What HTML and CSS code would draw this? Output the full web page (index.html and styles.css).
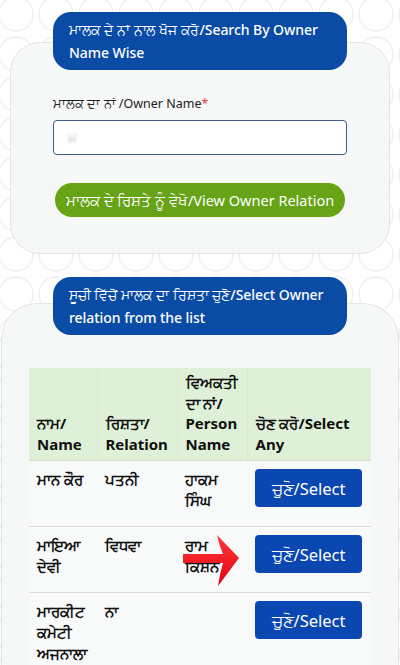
FILE: index.html
```html
<!DOCTYPE html>
<html lang="pa">
<head>
<meta charset="utf-8">
<title>Search By Owner</title>
<link rel="stylesheet" href="styles.css">
</head>
<body>
<div class="page">
  <section class="block block-search">
    <h2 class="pill">ਮਾਲਕ ਦੇ ਨਾਂ ਨਾਲ ਖੋਜ ਕਰੋ/Search By Owner Name Wise</h2>
    <div class="card card-search">
      <label class="field-label" for="owner">ਮਾਲਕ ਦਾ ਨਾਂ /Owner Name<span class="req">*</span></label>
      <div class="input"><span class="blur">ਮ</span></div>
      <button class="btn-green">ਮਾਲਕ ਦੇ ਰਿਸ਼ਤੇ ਨੂੰ ਵੇਖੋ/View Owner Relation</button>
    </div>
  </section>

  <section class="block block-list">
    <h2 class="pill">ਸੂਚੀ ਵਿੱਚੋਂ ਮਾਲਕ ਦਾ ਰਿਸ਼ਤਾ ਚੁਣੋ/Select Owner relation from the list</h2>
    <div class="card card-list">
      <table class="rel">
        <colgroup>
          <col class="c1"><col class="c2"><col class="c3"><col class="c4">
        </colgroup>
        <thead>
          <tr>
            <th>ਨਾਮ/ Name</th>
            <th>ਰਿਸ਼ਤਾ/ Relation</th>
            <th>ਵਿਅਕਤੀ ਦਾ ਨਾਂ/ Person Name</th>
            <th>ਚੋਣ ਕਰੋ/Select Any</th>
          </tr>
        </thead>
        <tbody>
          <tr>
            <td>ਮਾਨ ਕੌਰ</td>
            <td>ਪਤਨੀ</td>
            <td>ਹਾਕਮ ਸਿੰਘ</td>
            <td><button class="btn-select">ਚੁਣੋ/Select</button></td>
          </tr>
          <tr>
            <td>ਮਾਇਆ ਦੇਵੀ</td>
            <td>ਵਿਧਵਾ</td>
            <td class="arrow-cell">ਰਾਮ ਕਿਸ਼ਨ
              <svg class="arrow" width="58" height="52" viewBox="0 0 58 52">
                <defs>
                  <linearGradient id="ag" x1="0" y1="0" x2="0" y2="1">
                    <stop offset="0" stop-color="#ff3b3b"/>
                    <stop offset="1" stop-color="#e00010"/>
                  </linearGradient>
                </defs>
                <path d="M0 19 L40 19 Q36 10 34 0 L56 23 L35 51 Q37 38 40 28 L0 28 Z" fill="url(#ag)"/>
              </svg>
            </td>
            <td><button class="btn-select">ਚੁਣੋ/Select</button></td>
          </tr>
          <tr>
            <td>ਮਾਰਕੀਟ ਕਮੇਟੀ ਅਜਨਾਲਾ</td>
            <td>ਨਾ</td>
            <td></td>
            <td><button class="btn-select">ਚੁਣੋ/Select</button></td>
          </tr>
        </tbody>
      </table>
    </div>
  </section>
</div>
</body>
</html>
```

FILE: styles.css
```css
* { box-sizing: border-box; }
html, body { margin: 0; padding: 0; }
body {
  font-family: "Noto Sans", "Open Sans", sans-serif;
  background-color: #ffffff;
  background-image:
    radial-gradient(circle at 50% 50%, transparent 16px, #f0f0f0 16.5px, #f0f0f0 17.5px, transparent 18px);
  background-size: 40px 40px;
  background-position: -4px -6px;
  height: 665px;
  overflow: hidden;
}
.page { padding-top: 12px; }

.block { display: flex; flex-direction: column; }
.pill {
  position: relative;
  z-index: 2;
  margin: 0 53px;
  padding: 6px 13px 6px 16px;
  background: #0a4ba6;
  color: #fff;
  border-radius: 18px;
  font-size: 14px;
  font-weight: 500;
  line-height: 23px;
  letter-spacing: -0.05px;
}
.card {
  background: #f6f7f7;
  border: 1px solid #e3e5e5;
  border-radius: 30px;
}
.card-search {
  margin: -28px 10px 0;
  padding: 53px 42px 36px;
  display: flex;
  flex-direction: column;
}
.field-label {
  font-size: 12.5px;
  line-height: 16px;
  color: #222;
}
.req { color: #e53935; }
.input {
  margin-top: 8px;
  height: 35px;
  border: 1px solid #3d5b86;
  border-radius: 4px;
  background: #fff;
  padding: 0 14px;
  display: flex;
  align-items: center;
}
.blur {
  color: #bbb;
  font-size: 13px;
  filter: blur(1.5px);
}
.btn-green {
  margin: 28px 2px 0;
  height: 34px;
  border: 0;
  border-radius: 17px;
  background: #66a317;
  color: #fff;
  font-family: inherit;
  font-size: 14.5px;
  padding: 0;
}

.block-list { margin-top: 23px; }
.card-list {
  margin: -32px 1px 0;
  padding: 64px 28px 0 27px;
  border-radius: 36px;
  border-bottom: 0;
  border-bottom-left-radius: 0;
  border-bottom-right-radius: 0;
  height: 400px;
}
.rel {
  width: 342px;
  border-collapse: collapse;
  table-layout: fixed;
  background: #f8f9f9;
}
.c1 { width: 68px; }
.c2 { width: 80px; }
.c3 { width: 70px; }
.c4 { width: 124px; }
.rel th {
  background: #dff0d8;
  text-align: left;
  vertical-align: bottom;
  font-size: 15px;
  font-weight: 700;
  line-height: 20.5px;
  padding: 4px 8px 6px;
  color: #111;
  border-left: 1px solid #d7ead0;
  border-bottom: 1px solid #d2dccf;
}
.rel th:first-child { border-left: 0; }
.rel td {
  vertical-align: top;
  font-size: 15px;
  font-weight: 600;
  line-height: 21px;
  padding: 8px 8px 15px;
  color: #111;
  border-bottom: 1px solid #dcdcdc;
}
.btn-select {
  width: 107px;
  height: 38px;
  border: 0;
  border-radius: 4px;
  background: #0a47b0;
  color: #fff;
  font-family: inherit;
  font-size: 16.5px;
  padding: 0;
}
.arrow-cell { position: relative; }
.arrow {
  position: absolute;
  left: 6px;
  top: 8px;
}
```
